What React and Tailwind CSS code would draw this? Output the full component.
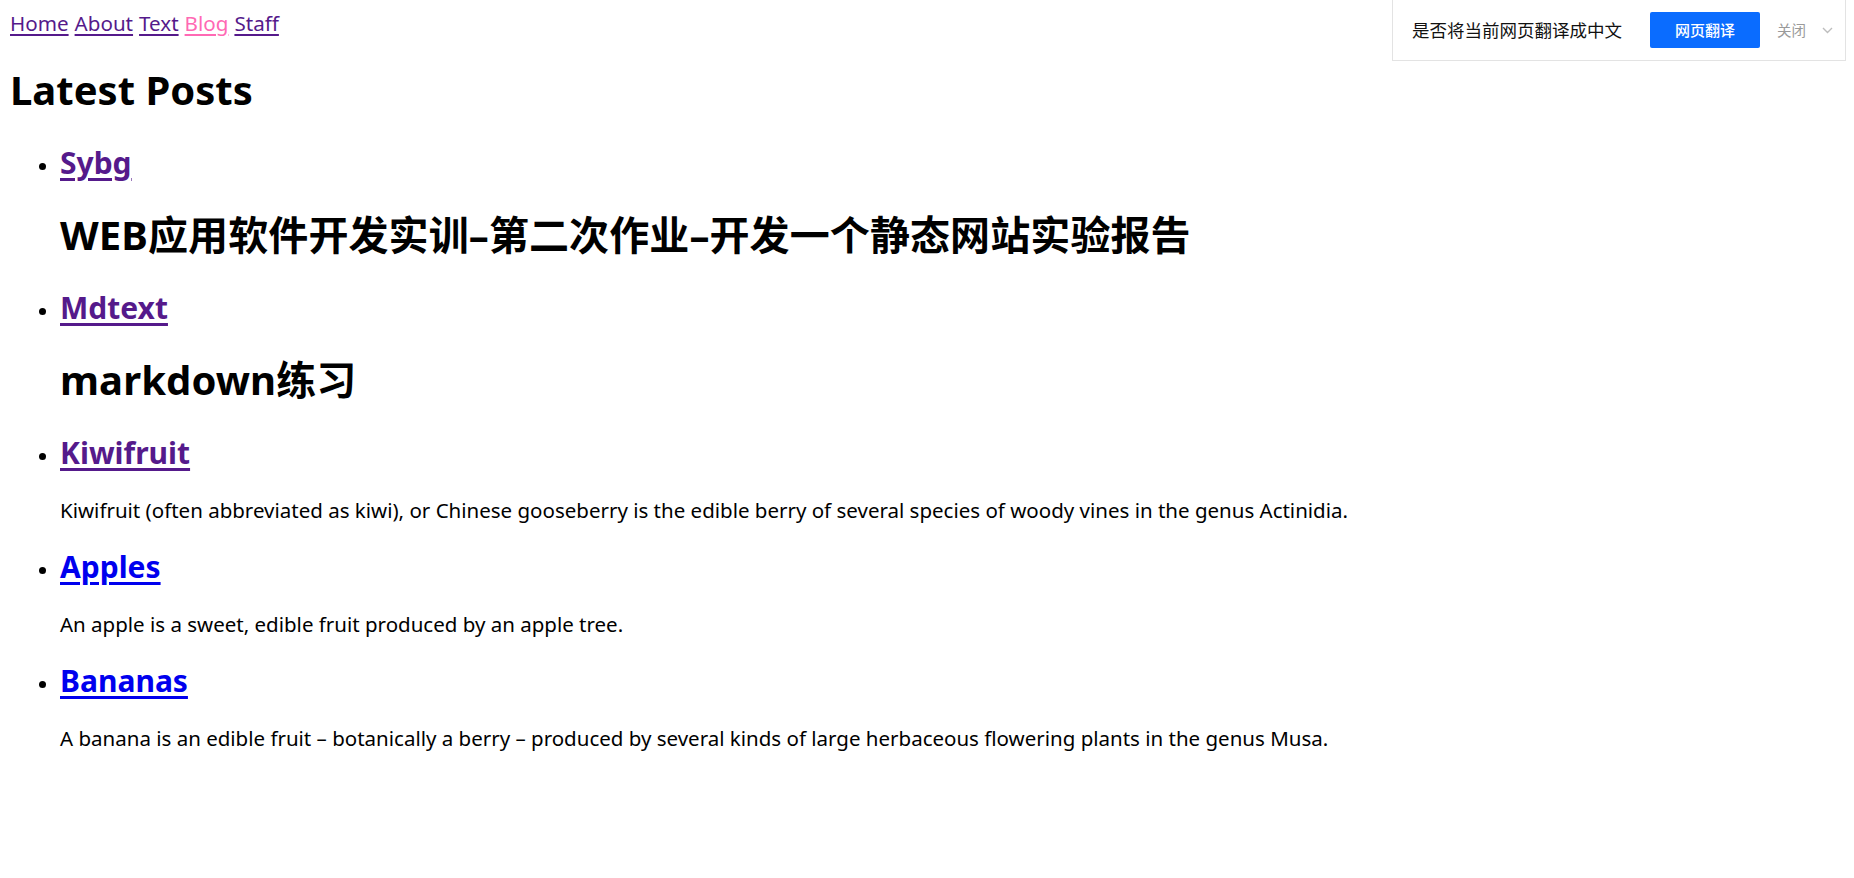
import React from 'react';

const font = 'font-["Noto_Sans","Noto_Sans_CJK_SC",sans-serif]';

const posts = [
    { slug: 'Sybg', visited: true, heading: 'WEB应用软件开发实训–第二次作业–开发一个静态网站实验报告' },
    { slug: 'Mdtext', visited: true, heading: 'markdown练习' },
    {
        slug: 'Kiwifruit',
        visited: true,
        text: 'Kiwifruit (often abbreviated as kiwi), or Chinese gooseberry is the edible berry of several species of woody vines in the genus Actinidia.',
    },
    { slug: 'Apples', text: 'An apple is a sweet, edible fruit produced by an apple tree.' },
    {
        slug: 'Bananas',
        text: 'A banana is an edible fruit – botanically a berry – produced by several kinds of large herbaceous flowering plants in the genus Musa.',
    },
];

const navLinks = ['Home', 'About', 'Text', 'Blog', 'Staff'];

const TranslateBar = () => (
    <div className="absolute top-0 left-[1392px] w-[454px] h-[61px] bg-white border border-t-0 border-[#e3e3e3] flex items-center font-['Noto_Sans_CJK_SC',sans-serif]">
        <span className="ml-[19px] text-[17.5px] text-[#111]">是否将当前网页翻译成中文</span>
        <button className="ml-[28px] w-[110px] h-[36px] bg-[#0a6cff] rounded-[2px] text-white text-[15px] font-medium">网页翻译</button>
        <span className="ml-[17px] text-[14.5px] text-[#9a9a9a]">关闭</span>
        <svg className="ml-[16px]" width="11" height="7" viewBox="0 0 11 7" fill="none">
            <path d="M1 1l4.5 4.5L10 1" stroke="#bdbdbd" strokeWidth="1.4" />
        </svg>
    </div>
);

const App = () => {
    return (
        <div className={`relative min-h-[878px] bg-white text-black p-[10px] ${font}`}>
            <nav className="text-[20.6px] leading-[26px] flex gap-[6px]">
                {navLinks.map((l) => (
                    <a
                        key={l}
                        href="#"
                        className={`underline underline-offset-[3px] ${l === 'Blog' ? 'text-[#ff69b4]' : 'text-[#551a8b]'}`}
                    >
                        {l}
                    </a>
                ))}
            </nav>

            <h1 className="mt-[27px] text-[40px] leading-[53px] font-bold">Latest Posts</h1>

            <ul className="mt-[27px] list-disc pl-[50px]">
                {posts.map((p) => (
                    <li key={p.slug} className="marker:text-[20px]">
                        <h2 className="mt-[25px] first:mt-0 text-[30px] leading-[40px] font-bold">
                            <a
                                href="#"
                                className={`underline underline-offset-[4px] ${p.visited ? 'text-[#551a8b]' : 'text-[#0000ee]'}`}
                            >
                                {p.slug}
                            </a>
                        </h2>
                        {p.heading ? (
                            <h1 className="mt-[25px] mb-[27px] text-[40px] leading-[53px] font-bold tracking-[0.1px]">{p.heading}</h1>
                        ) : (
                            <p className="mt-[24px] mb-[24px] text-[20.5px] leading-[26px]">{p.text}</p>
                        )}
                    </li>
                ))}
            </ul>

            <TranslateBar />
        </div>
    );
};

export default App;
